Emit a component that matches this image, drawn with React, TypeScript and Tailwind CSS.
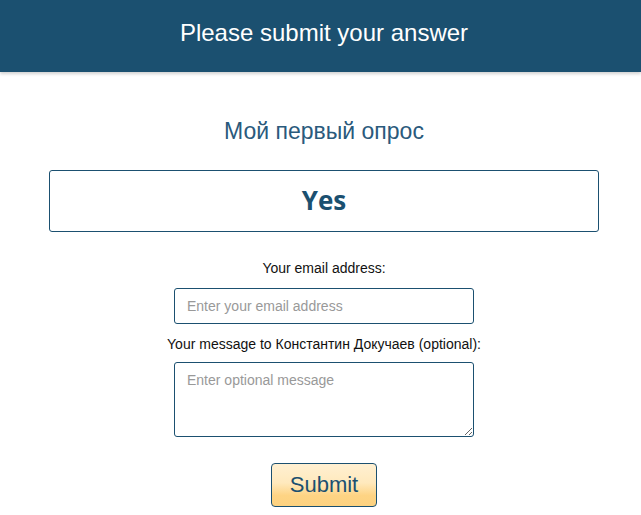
export default function App() {
  return (
    <div className="min-h-[515px] bg-white pl-[7px] font-['Liberation_Sans',Arial,sans-serif]">
      <header className="-ml-[7px] pl-[7px] h-[72px] bg-[#1b5070] flex items-center justify-center shadow-[0_2px_3px_rgba(0,0,0,0.18)]">
        <h1 className="text-white text-[24px] leading-none -mt-[6px]">Please submit your answer</h1>
      </header>

      <main className="flex flex-col items-center pt-[45px]">
        <h2 className="text-[23px] leading-[28px] text-[#2a5a7c]">Мой первый опрос</h2>

        <div className="mt-[25px] w-[550px] h-[62px] border border-[#1b5070] rounded-[3px] flex items-center justify-center">
          <span className="font-['Open_Sans',sans-serif] font-bold text-[26px] text-[#1b5070] -mt-[2px]">Yes</span>
        </div>

        <label className="mt-[27px] text-[14px] leading-[18px] text-[#111]">Your email address:</label>
        <input
          type="email"
          placeholder="Enter your email address"
          className="mt-[11px] w-[300px] h-[36px] border border-[#1b5070] rounded-[3px] px-[12px] text-[14px] placeholder:text-[#999] outline-none"
        />

        <label className="mt-[11px] text-[14px] leading-[18px] text-[#111]">
          Your message to Константин Докучаев (optional):
        </label>
        <textarea
          placeholder="Enter optional message"
          className="mt-[9px] w-[300px] h-[75px] border border-[#1b5070] rounded-[3px] px-[12px] py-[7px] text-[14px] placeholder:text-[#999] outline-none"
        />

        <button className="mt-[26px] w-[106px] h-[44px] pb-[2px] border border-[#1b5070] rounded-[4px] bg-[linear-gradient(to_bottom,#fff0d2_0%,#ffe9bd_45%,#fed484_75%,#fdd280_100%)] text-[22px] text-[#1b5070]">
          Submit
        </button>
      </main>
    </div>
  );
}
